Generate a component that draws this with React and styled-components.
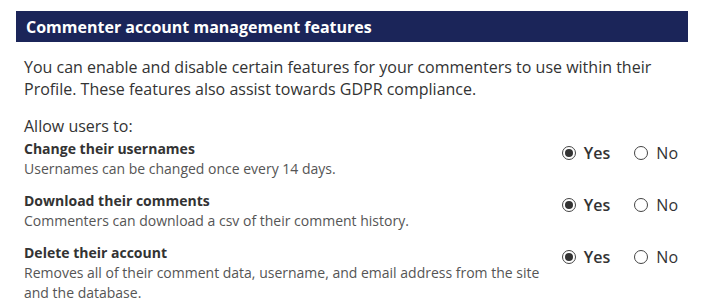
import React from 'react';
import styled, { createGlobalStyle } from 'styled-components';

const GlobalStyle = createGlobalStyle`
	body {
		margin: 0;
		background: #fff;
		font-family: 'Open Sans', 'Liberation Sans', sans-serif;
		color: #333;
	}
`;

const Panel = styled.section`
	padding: 11px 15px 0 16px;
`;

const Header = styled.h2`
	margin: 0;
	height: 31px;
	display: flex;
	align-items: center;
	padding: 0 10px;
	background: #1b2559;
	color: #fff;
	font-size: 16px;
	font-weight: 700;
`;

const Body = styled.div`
	padding: 14px 8px 0;
`;

const Intro = styled.p`
	margin: 0 0 15px;
	font-size: 16px;
	line-height: 22px;
	color: #333;
`;

const Lead = styled.div`
	font-size: 16px;
	line-height: 22px;
	margin-bottom: 2px;
	color: #333;
`;

const Option = styled.div`
	display: flex;
	align-items: flex-start;
	justify-content: space-between;
	margin-bottom: 12px;
`;

const Info = styled.div`
	max-width: 550px;
`;

const Title = styled.div`
	font-size: 14px;
	font-weight: 700;
	line-height: 20px;
	color: #333;
`;

const Desc = styled.div`
	font-size: 14px;
	line-height: 20px;
	color: #555;
`;

const Choices = styled.div`
	display: flex;
	gap: 24px;
	padding-top: 3px;
	margin-right: 2px;
`;

const Choice = styled.label`
	display: flex;
	align-items: center;
	gap: 8px;
	font-size: 16px;
	line-height: 22px;
	font-weight: ${(p) => (p.checked ? 600 : 400)};
	color: #333;
`;

const Dot = styled.span`
	box-sizing: border-box;
	width: 14px;
	height: 14px;
	border: 1px solid #444;
	border-radius: 50%;
	display: flex;
	align-items: center;
	justify-content: center;

	&::after {
		content: '';
		width: 8px;
		height: 8px;
		border-radius: 50%;
		background: ${(p) => (p.checked ? '#333' : 'transparent')};
	}
`;

const options = [
	{
		title: 'Change their usernames',
		desc: 'Usernames can be changed once every 14 days.',
	},
	{
		title: 'Download their comments',
		desc: 'Commenters can download a csv of their comment history.',
	},
	{
		title: 'Delete their account',
		desc: 'Removes all of their comment data, username, and email address from the site and the database.',
	},
];

const App = () => {
	return (
		<>
			<GlobalStyle />
			<Panel>
				<Header>Commenter account management features</Header>
				<Body>
					<Intro>
						You can enable and disable certain features for your commenters to use within their
						Profile. These features also assist towards GDPR compliance.
					</Intro>
					<Lead>Allow users to:</Lead>
					{options.map((o) => (
						<Option key={o.title}>
							<Info>
								<Title>{o.title}</Title>
								<Desc>{o.desc}</Desc>
							</Info>
							<Choices>
								<Choice checked>
									<Dot checked />
									Yes
								</Choice>
								<Choice>
									<Dot />
									No
								</Choice>
							</Choices>
						</Option>
					))}
				</Body>
			</Panel>
		</>
	);
};

export default App;
